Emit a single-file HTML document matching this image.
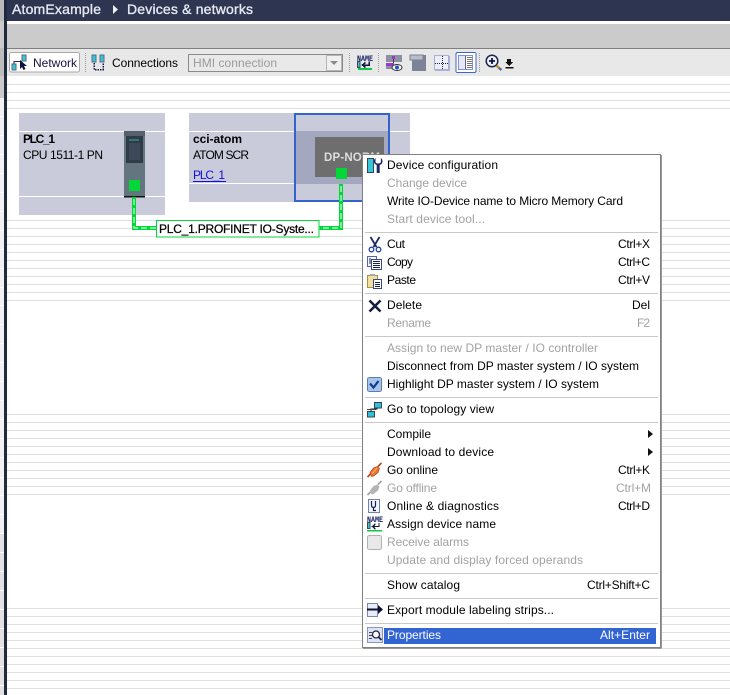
<!DOCTYPE html>
<html><head><meta charset="utf-8"><style>
html,body{margin:0;padding:0;background:#fff;width:730px;height:695px;overflow:hidden}
svg{display:block}
text{font-family:"Liberation Sans",sans-serif;font-size:12px;fill:#000}
.d{fill:#a2a2a2}
.b{font-weight:bold}
.t{font-size:14px;fill:#e6e9f2;stroke:#e6e9f2;stroke-width:.35}
</style></head><body>
<svg width="730" height="695" viewBox="0 0 730 695" xmlns="http://www.w3.org/2000/svg" shape-rendering="crispEdges">
<rect width="730" height="695" fill="#fff"/>
<!-- left strip -->
<rect x="0" y="0" width="4" height="21" fill="#b9b9b9"/><rect x="0" y="21" width="4" height="27" fill="#cbcbcb"/>
<rect x="0" y="48" width="4" height="28" fill="#bdbdbd"/><rect x="0" y="76" width="4" height="22" fill="#cacaca"/>
<rect x="0" y="98" width="4" height="435" fill="#f1f1f1"/><rect x="0" y="533" width="4" height="162" fill="#e2e2e2"/>
<path d="M0 116.500h4M0 135.500h4M0 154.500h4M0 173.500h4M0 192.500h4M0 211.500h4M0 230.500h4M0 249.500h4M0 268.500h4M0 287.500h4M0 305.500h4M0 324.500h4M0 343.500h4M0 362.500h4M0 381.500h4M0 400.500h4M0 419.500h4M0 438.500h4M0 457.500h4M0 477.500h4M0 495.500h4M0 514.500h4M0 533.500h4M0 552.500h4M0 571.500h4M0 590.500h4M0 609.500h4M0 628.500h4M0 647.500h4M0 666.500h4M0 685.500h4" stroke="#fff"/>
<rect x="4" y="0" width="3" height="695" fill="#1f2a3f"/>
<!-- header -->
<rect x="7" y="0" width="723" height="21" fill="#2d3550"/>
<rect x="7" y="24" width="723" height="24" fill="#cbcbcb"/>
<rect x="7" y="48" width="723" height="1" fill="#7f7f7f"/>
<rect x="7" y="49" width="723" height="27" fill="#e8e8e8"/>
<text x="12" y="14" class="t" textLength="89" lengthAdjust="spacing">AtomExample</text>
<path d="M113 5l5 4.500-5 4.500z" fill="#eef0f6" shape-rendering="auto"/>
<text x="127" y="14" class="t" textLength="126" lengthAdjust="spacing">Devices &amp; networks</text>
<!-- grid lines -->
<path d="M7 84.500h723M7 92.500h723M7 100.500h723M7 108.500h723M7 220.500h723M7 228.500h723M7 236.500h723M7 244.500h723M7 252.500h723M7 260.500h723M7 268.500h723M7 276.500h723M7 284.500h723M7 292.500h723M7 300.500h723M7 414.500h723M7 422.500h723M7 430.500h723M7 438.500h723M7 446.500h723M7 454.500h723M7 462.500h723M7 470.500h723M7 478.500h723M7 486.500h723M7 494.500h723M7 608.500h723M7 616.500h723M7 624.500h723M7 632.500h723M7 640.500h723M7 648.500h723M7 656.500h723M7 664.500h723M7 672.500h723M7 680.500h723M7 688.500h723" stroke="#dfdfdf"/>
<!-- toolbar -->
<rect x="9.500" y="52.500" width="70" height="19.500" rx="2" fill="#fff" stroke="#a8a8a8"/>
<rect x="12" y="64" width="4" height="6" fill="#32c8d8" stroke="#5a6a80" stroke-width=".6"/>
<rect x="22" y="55" width="4" height="6" fill="#32c8d8" stroke="#5a6a80" stroke-width=".6"/>
<path d="M14 64v-2.500h6" stroke="#222c50" fill="none"/>
<path d="M20 60l0 9 2-2 1.500 3 2-1-1.500-3h3z" fill="#0c1240" shape-rendering="auto"/>
<text x="33" y="67" style="fill:#1a1040" textLength="44" lengthAdjust="spacing">Network</text>
<path d="M85.500 53v20" stroke="#999" stroke-dasharray="1 1"/>
<rect x="92" y="55" width="4" height="7" fill="#32c8d8" stroke="#5a6a80" stroke-width=".6"/>
<rect x="100" y="55" width="4" height="7" fill="#32c8d8" stroke="#5a6a80" stroke-width=".6"/>
<path d="M94 63v6.500h9V63" fill="none" stroke="#101840" stroke-width="1.500" stroke-dasharray="1.500 1"/>
<text x="112" y="67" textLength="66" lengthAdjust="spacing">Connections</text>
<rect x="188.500" y="54.500" width="154" height="17" fill="#e9e9e9" stroke="#8a8a8a"/>
<rect x="326.500" y="55.500" width="15" height="15" fill="#f0f0f0" stroke="#b5b5b5"/>
<path d="M330 61h8l-4 4z" fill="#8a8a8a" shape-rendering="auto"/>
<text x="193" y="67" style="fill:#9a9a9a" textLength="84" lengthAdjust="spacing">HMI connection</text>
<path d="M349.500 53v20M378.500 53v20M479.500 53v20" stroke="#999" stroke-dasharray="1 1"/>
<!-- name icon -->
<text x="357" y="61" class="b" style="font-size:8px;fill:#101860;font-family:'Liberation Mono',monospace" textLength="16" lengthAdjust="spacingAndGlyphs">NAME</text>
<rect x="357.500" y="61.500" width="2.500" height="6" fill="#32c8d8" stroke="#445" stroke-width=".6"/>
<path d="M369 61.500v3.500h-6M365.500 62.500l-3 2.500 3 2.500" fill="none" stroke="#111840" stroke-width="1.500"/>
<rect x="358" y="68" width="14" height="2" fill="#10c840"/>
<!-- view icon -->
<rect x="386" y="55" width="16" height="7" fill="#8d90a2"/>
<rect x="392" y="56" width="3" height="3" fill="#9a38c8"/>
<path d="M393.500 59v4" stroke="#444"/>
<rect x="386" y="63" width="8" height="3" fill="#9a38c8"/><rect x="386" y="66" width="6" height="3" fill="#8d90a2"/>
<ellipse cx="397" cy="67.500" rx="5" ry="3" fill="#fff" stroke="#333" shape-rendering="auto"/><circle cx="397" cy="67.500" r="2" fill="#2050c8" shape-rendering="auto"/>
<!-- dark panel icon -->
<rect x="412" y="55" width="14" height="16" fill="#7d8299"/><rect x="410" y="55" width="13" height="5" fill="#b9bccb" stroke="#7d8299" stroke-width=".7"/>
<!-- grid icon -->
<rect x="434.500" y="55.500" width="14" height="14" fill="#eceef8" stroke="#a9b0d4"/>
<path d="M435 63.500h14M442.500 56v13" stroke="#223" stroke-dasharray="1 1" fill="none"/>
<path d="M435 70.500h15M449.500 56v15" stroke="#a9b0d4"/>
<!-- active panel -->
<rect x="456" y="52.500" width="20" height="20" rx="1.500" fill="#fff" stroke="#3c66c8" stroke-width="1"/>
<rect x="458.500" y="55.500" width="14" height="14" fill="#e4e8fa" stroke="#8690c8"/>
<rect x="465" y="56" width="7" height="13" fill="#fff"/>
<path d="M465.500 56v13" stroke="#667"/>
<path d="M467 57.500h5M467 59.500h5M467 61.500h5M467 63.500h5M467 65.500h5M467 67.500h5" stroke="#777"/>
<!-- zoom -->
<g shape-rendering="auto">
<circle cx="492" cy="61" r="5.800" fill="#eef0fa" stroke="#1c2448" stroke-width="1.500"/>
<path d="M489 61h6M492 58v6" stroke="#0c1448" stroke-width="1.800"/>
<path d="M496.500 65.500l3 3" stroke="#c09030" stroke-width="2.500"/><path d="M499 68l2.500 2" stroke="#4a6aa0" stroke-width="2.200"/>
</g>
<path d="M507 59h4v3h2l-4 4-4-4h2zM505.500 67h8v1.500h-8z" fill="#111"/>
<!-- PLC device -->
<rect x="19" y="113" width="146" height="102" fill="#c9cbda"/>
<path d="M19 131.500h146M19 196.500h146" stroke="#fff"/>
<text x="23" y="143" class="b" textLength="32" lengthAdjust="spacing">PLC_1</text>
<text x="23" y="159" textLength="80" lengthAdjust="spacing">CPU 1511-1 PN</text>
<rect x="124" y="131" width="21" height="66" fill="#64757f"/>
<rect x="124" y="131" width="21" height="5" fill="#55606a"/>
<rect x="126" y="136" width="17" height="27" fill="#2f3b47"/>
<rect x="129" y="139" width="10" height="2" fill="#2a7a7a"/>
<rect x="129" y="143" width="11" height="17" fill="#3d4858"/>
<rect x="129" y="180" width="11" height="11" fill="#00d838"/>
<rect x="124" y="196" width="21" height="1.500" fill="#111"/>
<!-- atom device -->
<rect x="189" y="113" width="221" height="89" fill="#c9cbda"/>
<path d="M189 131.500h221M189 183.500h221" stroke="#fff"/>
<text x="193" y="143" class="b" textLength="49" lengthAdjust="spacing">cci-atom</text>
<text x="193" y="159" textLength="56" lengthAdjust="spacing">ATOM SCR</text>
<text x="193" y="179" style="fill:#1010e0" textLength="32" lengthAdjust="spacing">PLC_1</text>
<rect x="193" y="181" width="33" height="1" fill="#1010e0"/>
<rect x="296" y="131" width="92" height="53" fill="#a3a7c0"/>
<rect x="315" y="137" width="69" height="40" fill="#6e6e6e"/>
<text x="324" y="161" class="b" style="fill:#dcdcdc;font-size:11.500px" textLength="56" lengthAdjust="spacing">DP-NORM</text>
<rect x="295" y="114" width="94" height="87" fill="none" stroke="#3264cc" stroke-width="2"/>
<rect x="336" y="168" width="11" height="11" fill="#00d838"/>
<!-- network -->
<path d="M134 197v31h24M341 184v44h-24" fill="none" stroke="#00d838" stroke-width="4"/>
<path d="M134 199v29h24M341 186v42h-24" fill="none" stroke="#fff" stroke-width="1.400" stroke-dasharray="6 3"/>
<rect x="156.500" y="220.500" width="162.500" height="16.500" fill="#fff" stroke="#00d838"/>
<text x="159" y="233" style="stroke:#000;stroke-width:.25" textLength="155" lengthAdjust="spacing">PLC_1.PROFINET IO-Syste...</text>
<!-- menu -->
<rect x="362.500" y="154.500" width="298" height="493" fill="#fff" stroke="#808080"/>
<path d="M661.500 155v493.500M363 648.500h298" stroke="#9a9a9a"/>
<path d="M365 232.500h293M365 293.500h293M365 336.500h293M365 397.500h293M365 422.500h293M365 573.500h293M365 598.500h293M365 623.500h293" stroke="#c8c8c8"/>
<rect x="384" y="628" width="272" height="16" fill="#3264d2"/>
<!-- items -->
<text x="387" y="169" textLength="111" lengthAdjust="spacing">Device configuration</text>
<text x="387" y="187" class="d" textLength="80" lengthAdjust="spacing">Change device</text>
<text x="387" y="205" textLength="236" lengthAdjust="spacing">Write IO-Device name to Micro Memory Card</text>
<text x="387" y="223" class="d" textLength="98" lengthAdjust="spacing">Start device tool...</text>
<text x="387" y="248" textLength="18" lengthAdjust="spacing">Cut</text>
<text x="387" y="266" textLength="26" lengthAdjust="spacing">Copy</text>
<text x="387" y="284" textLength="29" lengthAdjust="spacing">Paste</text>
<text x="387" y="309" textLength="35" lengthAdjust="spacing">Delete</text>
<text x="387" y="327" class="d" textLength="44" lengthAdjust="spacing">Rename</text>
<text x="387" y="352" class="d" textLength="211" lengthAdjust="spacing">Assign to new DP master / IO controller</text>
<text x="387" y="370" textLength="252" lengthAdjust="spacing">Disconnect from DP master system / IO system</text>
<text x="387" y="388" textLength="212" lengthAdjust="spacing">Highlight DP master system / IO system</text>
<text x="387" y="413" textLength="107" lengthAdjust="spacing">Go to topology view</text>
<text x="387" y="438" textLength="44" lengthAdjust="spacing">Compile</text>
<text x="387" y="456" textLength="107" lengthAdjust="spacing">Download to device</text>
<text x="387" y="474" textLength="51" lengthAdjust="spacing">Go online</text>
<text x="387" y="492" class="d" textLength="50" lengthAdjust="spacing">Go offline</text>
<text x="387" y="510" textLength="112" lengthAdjust="spacing">Online &amp; diagnostics</text>
<text x="387" y="528" textLength="109" lengthAdjust="spacing">Assign device name</text>
<text x="387" y="546" class="d" textLength="82" lengthAdjust="spacing">Receive alarms</text>
<text x="387" y="564" class="d" textLength="196" lengthAdjust="spacing">Update and display forced operands</text>
<text x="387" y="589" textLength="73" lengthAdjust="spacing">Show catalog</text>
<text x="387" y="614" textLength="167" lengthAdjust="spacing">Export module labeling strips...</text>
<text x="387" y="639" style="fill:#fff" textLength="54" lengthAdjust="spacing">Properties</text>
<!-- shortcuts -->
<text x="618" y="248" textLength="32" lengthAdjust="spacing">Ctrl+X</text>
<text x="618" y="266" textLength="32" lengthAdjust="spacing">Ctrl+C</text>
<text x="618" y="284" textLength="32" lengthAdjust="spacing">Ctrl+V</text>
<text x="632" y="309" textLength="18" lengthAdjust="spacing">Del</text>
<text x="637" y="327" class="d" textLength="13" lengthAdjust="spacing">F2</text>
<text x="618" y="474" textLength="32" lengthAdjust="spacing">Ctrl+K</text>
<text x="616" y="492" class="d" textLength="35" lengthAdjust="spacing">Ctrl+M</text>
<text x="618" y="510" textLength="32" lengthAdjust="spacing">Ctrl+D</text>
<text x="587" y="589" textLength="63" lengthAdjust="spacing">Ctrl+Shift+C</text>
<text x="600" y="639" style="fill:#fff" textLength="50" lengthAdjust="spacing">Alt+Enter</text>
<path d="M648 430l5 4-5 4zM648 448l5 4-5 4z" fill="#111" shape-rendering="auto"/>
<!-- menu icons -->
<rect x="367.500" y="158.500" width="6" height="14" fill="#32c8d8" stroke="#3a4460"/>
<path d="M375.500 158v3.500q0 2 2.700 2t2.700-2v-3.500q1.600 1 1.600 3.500t-2.800 3.500v8h-3v-8q-2.800-1-2.800-3.500t1.600-3.500z" fill="#1c2a60" shape-rendering="auto"/>
<g shape-rendering="auto">
<path d="M370.500 237l6 10M379.500 237l-6 10" stroke="#1c2a60" stroke-width="1.800"/>
<circle cx="371.500" cy="249.500" r="2.300" fill="none" stroke="#2040a0" stroke-width="1.300"/><circle cx="378.500" cy="249.500" r="2.300" fill="none" stroke="#2040a0" stroke-width="1.300"/>
<path d="M369.500 300.500l11 11M380.500 300.500l-11 11" stroke="#141c40" stroke-width="2.500"/>
</g>
<rect x="367.500" y="256.500" width="9" height="10" fill="#f4f6fc" stroke="#5066a8"/>
<rect x="371.500" y="259.500" width="10" height="10" fill="#fff" stroke="#384880"/>
<path d="M373 261.500h7M373 263.500h7M373 265.500h7M373 267.500h7M369 259h2M369 261h2M369 263h2" stroke="#182050"/>
<rect x="367.500" y="275.500" width="10" height="12" fill="#f0e0a0" stroke="#b09040"/>
<rect x="370" y="274" width="5" height="2" fill="#aab"/>
<rect x="373.500" y="279.500" width="8" height="9" fill="#fff" stroke="#384880"/>
<path d="M375 282.500h5M375 284.500h5M375 286.500h5" stroke="#182050"/>
<rect x="367.500" y="377.500" width="14" height="14" rx="2" fill="#a8c4ea" stroke="#5a7cb0"/>
<path d="M370 383.500l3.500 4 5-6.500" stroke="#0c3c90" stroke-width="2.200" fill="none" shape-rendering="auto"/>
<!-- topology -->
<rect x="374.500" y="402.500" width="7" height="5.500" fill="#30c0d8" stroke="#345" stroke-width=".8"/>
<rect x="367.500" y="411.500" width="7" height="5.500" fill="#30c0d8" stroke="#345" stroke-width=".8"/>
<path d="M371 411.500v-2.500h6v-1" stroke="#222" fill="none"/>
<rect x="367" y="409" width="9" height="1" fill="#444"/>
<!-- go online / offline -->
<g shape-rendering="auto">
<path d="M367.500 477l3-3M378 466.500l3.500-3.500" stroke="#b04818" stroke-width="1.600"/>
<path d="M370 472.500l3.500-4.500 4-1.500 2 2-1.500 4-4.500 3.500-2 .500z" fill="#f07028" stroke="#b04818" stroke-width=".7"/>
<path d="M372 474l5-6" stroke="#ffd0a0" stroke-width=".8"/>
<path d="M367.500 495l3-3M378 484.500l3.500-3.500" stroke="#a0a0a0" stroke-width="1.600"/>
<path d="M370 490.500l3.500-4.500 4-1.500 2 2-1.500 4-4.500 3.500-2 .500z" fill="#b4b4b4"/>
</g>
<!-- diagnostics -->
<rect x="368.500" y="499.500" width="11" height="13" fill="#f2f4fc" stroke="#7080b0"/>
<path d="M371.500 501v4q0 2.500 2 2.500t2-2.500v-4M373.500 507.500v3h2.500" stroke="#182050" fill="none" shape-rendering="auto" stroke-width="1.200"/>
<!-- assign name -->
<text x="367" y="522" class="b" style="font-size:8px;fill:#101860;font-family:'Liberation Mono',monospace" textLength="16" lengthAdjust="spacingAndGlyphs">NAME</text>
<rect x="367.500" y="522.500" width="2.500" height="6" fill="#32c8d8" stroke="#445" stroke-width=".6"/>
<path d="M379 523v3.500h-6M375.500 524l-3 2.500 3 2.500" fill="none" stroke="#111840" stroke-width="1.400"/>
<rect x="367" y="530" width="15" height="1.500" fill="#10c840"/>
<!-- receive alarm -->
<rect x="367.500" y="535.500" width="14" height="14" rx="2" fill="#e8e8e8" stroke="#b0b0b0"/>
<!-- export -->
<rect x="367.500" y="603.500" width="10" height="13" fill="#e8ecf8" stroke="#7888b8"/>
<path d="M367 609.500h12" stroke="#0c1030" stroke-width="2"/>
<path d="M378 605l5 4.500-5 4.500z" fill="#0c1030" shape-rendering="auto"/>
<!-- properties -->
<rect x="367.500" y="627.500" width="15" height="15" fill="#dde2f4" stroke="#8a96c0"/>
<path d="M369 632.500h3M369 635.500h3M369 638.500h3" stroke="#445"/>
<circle cx="376" cy="634.500" r="3.500" fill="#fff" stroke="#1c2448" stroke-width="1.300" shape-rendering="auto"/>
<path d="M378.500 637l3 3" stroke="#1c2448" stroke-width="1.800" shape-rendering="auto"/>
</svg>
</body></html>
